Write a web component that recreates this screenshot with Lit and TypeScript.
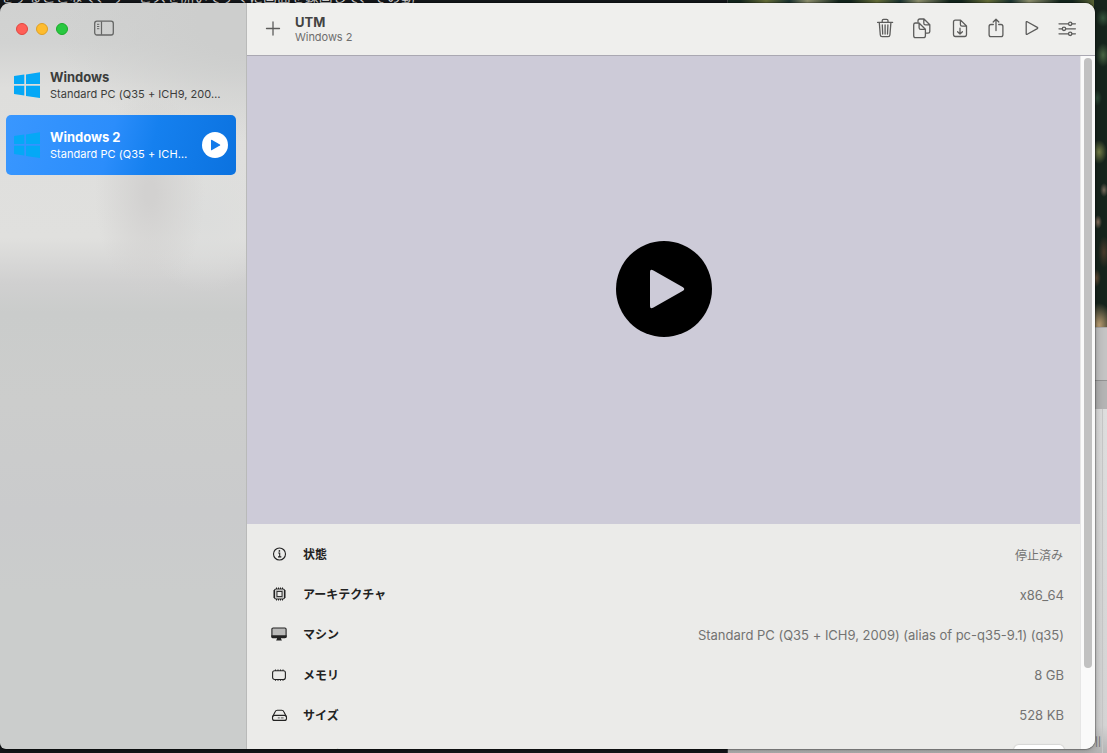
import { LitElement, html, css, svg } from "lit";
import { customElement, property } from "lit/decorators.js";

const toolbarIcons = {
  plus: svg`<path d="M13 6v13M6.500 12.500h13"/>`,
  trash: svg`<g transform="translate(0 1)"><path d="M5.600 6.400h15M7.300 6.600l1 12.400q.1 1.700 1.800 1.700h6q1.700 0 1.800-1.700l1-12.400M10.200 6.200V4.700q0-1.300 1.300-1.300h3.200q1.300 0 1.300 1.300v1.500M10.300 9l.4 9M13.100 9v9M15.900 9l-.4 9"/></g>`,
  copy: svg`<g transform="translate(1.500 .8)"><path d="M8.500 5.700V5Q8.500 3.200 10.300 3.200H14.500L20.300 9V15.600Q20.300 17.400 18.500 17.400H16.800M14.300 3.400V7.400Q14.300 9.100 16 9.100H20M4.200 9Q4.200 7.200 6 7.200H9.500L15.900 13.500V20Q15.900 21.900 14 21.900H6Q4.200 21.900 4.200 20ZM9.600 7.500V11.900Q9.600 13.600 11.300 13.600H15.700"/></g>`,
  download: svg`<g transform="translate(2 1)"><path d="M6.500 6Q6.500 4.100 8.400 4.100H13.600L19.500 10V18.600Q19.500 20.500 17.600 20.500H8.400Q6.500 20.500 6.500 18.600ZM13.400 4.300V8.500Q13.400 10.200 15.100 10.200H19.200M13 12.200V18M10.600 15.700L13 18.100L15.400 15.700"/></g>`,
  share: svg`<g transform="translate(2 1)"><path d="M10.300 8.500H8Q6.100 8.500 6.100 10.400V18.700Q6.100 20.600 8 20.600H18Q19.900 20.600 19.900 18.700V10.400Q19.900 8.500 18 8.500H15.700M13 14.500V3.300M10.200 6L13 3.200L15.800 6"/></g>`,
  play: svg`<g transform="translate(1 0)"><path d="M7.200 7.300Q7.200 6.200 8.200 6.700L18.300 12.400Q19.200 13 18.300 13.600L8.200 19.300Q7.200 19.800 7.200 18.700Z"/></g>`,
  sliders: svg`<g transform="translate(0 .5)"><path d="M5 8.300h9.400M18 8.300h3.400M5 13.300h3.200M11.800 13.300h9.600M5 18.300h9.400M18 18.300h3.400"/><circle cx="16.200" cy="8.300" r="1.700"/><circle cx="10" cy="13.300" r="1.700"/><circle cx="16.200" cy="18.300" r="1.700"/></g>`,
};

const rowIcons = {
  info: svg`<circle cx="8.500" cy="8" r="6"/><path d="M7.200 7h1.500v3.800M7 10.900h3.300"/><circle cx="8.400" cy="4.900" r=".85" fill="currentColor" stroke="none"/>`,
  cpu: svg`<rect x="3.500" y="3" width="10" height="10" rx="1.600"/><path stroke-width="1" d="M5.500 1.500V3M7.500 1.500V3M9.500 1.500V3M11.500 1.500V3M5.500 13v1.500M7.500 13v1.500M9.500 13v1.500M11.500 13v1.500M2 5h1.500M2 7h1.500M2 9h1.500M2 11h1.500M13.500 5H15M13.500 7H15M13.500 9H15M13.500 11H15"/><rect x="4.500" y="4" width="8" height="8" fill="#b8b8b7" stroke="none"/><rect x="6" y="5.500" width="5" height="5" fill="#ebebe9" stroke-width=".9"/>`,
  display: svg`<rect x=".9" y="2" width="14.200" height="9.600" rx="1.200" fill="#b9b9b8"/><path fill="currentColor" stroke="none" d="M.4 9.300h15.200v1.500q0 1.300-1.300 1.300H1.700Q.4 12.100.4 10.800ZM6 12h4v1.500h.8v1.100H5.200v-1.100H6z"/>`,
  memory: svg`<rect x="1.600" y="3.800" width="12.800" height="8.700" rx="2"/><path d="M4.500 2.500v1.300M7 2.500v1.300M9.500 2.500v1.300M12 2.500v1.300M4.500 12.500v1.300M7 12.500v1.300M9.500 12.500v1.300M12 12.500v1.300"/>`,
  drive: svg`<path d="M1.500 10L4 5Q4.700 3.300 6.400 3.300h4.200q1.700 0 2.400 1.700l2.500 5"/><rect x="1.500" y="8.400" width="14" height="5" rx="2"/><path stroke-width="1.300" stroke="#777" d="M6.800 10.900h2M9.800 10.900h2.800"/>`,
};

const windowsLogo = svg`<path d="M0 4L10.300 2.600V12H0ZM12 2.400L26 .3V12H12ZM0 13.700H10.300V23.600L0 22.100ZM12 13.700H26V26L12 23.900Z"/>`;

@customElement("vm-item")
class VmItem extends LitElement {
  @property() name = "";
  @property() desc = "";
  @property({ type: Boolean, reflect: true }) selected = false;

  static styles = css`
    :host { display: flex; align-items: center; height: 60px; padding: 0 8px; box-sizing: border-box; border-radius: 5px; color: #3c3d3c; }
    :host([selected]) { color: #fff; background: linear-gradient(105deg, #3997ff 0%, #2b8dfb 45%, #1580ef 63%, #0b72df 100%); }
    .logo { width: 26px; height: 26px; flex: none; fill: #05a8f6; }
    .text { flex: 1; min-width: 0; margin-left: 10px; }
    .name { font-size: 13px; line-height: 17px; font-weight: 700; letter-spacing: -.02px; white-space: nowrap; }
    .desc { font-size: 11px; line-height: 16px; letter-spacing: .04px; white-space: nowrap; }
    .play { width: 26px; height: 26px; flex: none; }
  `;

  render() {
    return html`
      <svg class="logo" viewBox="0 0 26 26">${windowsLogo}</svg>
      <div class="text">
        <div class="name">${this.name}</div>
        <div class="desc">${this.desc}</div>
      </div>
      ${this.selected
        ? html`<svg class="play" viewBox="0 0 26 26"><circle cx="13" cy="13" r="13" fill="#fff"/><path d="M9 8.600Q9 7.300 10.100 7.900L17.900 12.400Q18.800 13 17.900 13.600L10.100 18.100Q9 18.700 9 17.400Z" fill="#137bea"/></svg>`
        : ""}
    `;
  }
}

@customElement("detail-row")
class DetailRow extends LitElement {
  @property() icon: keyof typeof rowIcons | "" = "";
  @property() label = "";
  @property() value = "";

  static styles = css`
    :host { display: flex; align-items: center; height: 40.200px; padding: 0 16px 0 24px; }
    .icon { width: 17px; height: 16px; flex: none; fill: none; stroke: currentColor; stroke-width: 1.100; color: #222; margin-top: 1px; }
    .label { margin-left: 15px; flex: 1; font-size: 12px; font-weight: 700; color: #222; white-space: nowrap; }
    .value { font-size: 13px; letter-spacing: -.01px; color: #737372; white-space: nowrap; padding-top: 2px; }
    .cjk { font-size: 12px; margin-right: 1px; }
  `;

  render() {
    return html`
      <svg class="icon" viewBox="0 0 17 16">${this.icon ? rowIcons[this.icon] : ""}</svg>
      <span class="label">${this.label}</span>
      <span class="value ${/[\u3040-\u9fff]/.test(this.value) ? "cjk" : ""}">${this.value}</span>
      <slot></slot>
    `;
  }
}

@customElement("app-root")
class AppRoot extends LitElement {
  static styles = css`
    :host { display: block; position: relative; width: 1107px; height: 753px; overflow: hidden; font-family: Inter, "Noto Sans CJK JP", sans-serif; background: #14171a; }
    .desktop { position: absolute; inset: 0; display: grid; grid-template-columns: 728px 1fr; }
    .terminal { color: #d4d4d4; font-size: 13.900px; line-height: 16px; white-space: nowrap; overflow: hidden; background: #14171a; border-right: 1px solid #3b3e40; }
    .line { margin-top: -11px; }
    .behind { display: flex; flex-direction: column; background: #b7b7b7; }
    .photo { height: 327px; background:
      radial-gradient(ellipse 7px 9px at 375px 18px, #35543c, transparent),
      radial-gradient(ellipse 7px 12px at 375px 55px, #4a6644, transparent),
      radial-gradient(ellipse 5px 8px at 369px 98px, #2e4d3a, transparent),
      radial-gradient(ellipse 8px 12px at 371px 152px, #77824a, transparent),
      radial-gradient(ellipse 4px 7px at 376px 190px, #75695a, transparent),
      radial-gradient(ellipse 4px 7px at 370px 222px, #8a7462, transparent),
      radial-gradient(ellipse 6px 16px at 376px 252px, #4a3c2c, transparent),
      radial-gradient(ellipse 5px 9px at 368px 278px, #6a5138, transparent),
      radial-gradient(ellipse 14px 22px at 371px 325px, #c0a276, transparent),
      linear-gradient(90deg, transparent 366px, #16241c 366px),
      repeating-linear-gradient(97deg, #14261e 0 12px, #67703a 38px, #1c3431 61px, #909370 79px, #14261e 110px); }
    .bar { height: 52px; background: #c4c4c4; border-bottom: 1px solid #939393; border-top: 1px solid #aaa; }
    .tab { height: 28px; background: #b4b4b4; }
    .doc { flex: 1; background: linear-gradient(90deg, transparent 374px, #c9c9c9 374px 375px, transparent 375px), linear-gradient(#dedede, #d4d4d4 92%, #b5b5b5); font-size: 9px; color: #666; display: flex; align-items: flex-end; justify-content: flex-end; padding: 0 6px 6px 0; }
    .window { position: absolute; left: 0; top: 3px; width: 1095px; height: 746px; display: flex; overflow: hidden; border-radius: 9px 10px 10px 6px; box-shadow: 0 0 1px 1px rgba(0,0,0,.28), 1px 2px 8px rgba(0,0,0,.25); }
    .sidebar { width: 246px; flex: none; border-right: 1px solid #b9bab9; background:
      radial-gradient(ellipse 55px 105px at 150px 190px, #d2d1d0 10%, transparent),
      radial-gradient(ellipse 65px 75px at 205px 215px, #dcdddc, transparent),
      radial-gradient(ellipse 190px 120px at 245px 20px, #cdcecd 25%, transparent),
      linear-gradient(180deg, #d0d1d0 0, #d2d3d2 40px, #dededc 85px, #e0e0de 235px, #d0d0d0 280px, #cacccb 310px, #cccdcc 400px, #cacbcc 510px, #cbcdcc 590px, #cbcdcc 100%); }
    .chrome { height: 52px; display: flex; align-items: center; padding-left: 16px; gap: 8px; }
    .light { width: 12px; height: 12px; border-radius: 50%; box-sizing: border-box; border: 1px solid; }
    .red { background: #ff5f57; border-color: #e14640; }
    .yellow { background: #febc2e; border-color: #dfa023; }
    .green { background: #28c840; border-color: #1aab29; }
    .toggle { width: 20px; height: 16px; margin-left: 18px; margin-bottom: 2px; fill: none; stroke: #656665; }
    .list { padding: 0 10px 0 6px; }
    .main { flex: 1; min-width: 0; display: flex; flex-direction: column; background: #ebebe9; }
    .toolbar { height: 52px; flex: none; display: flex; align-items: center; background: #efefed; border-bottom: 1px solid #aaa8b2; padding: 0 15px 0 13px; box-sizing: content-box; }
    .tool { width: 26px; height: 26px; flex: none; fill: none; stroke: #5c5c5b; stroke-width: 1.300; stroke-linecap: round; stroke-linejoin: round; }
    .titles { flex: 1; margin-left: 9px; padding-top: 0; }
    .title { font-size: 13px; font-weight: 700; line-height: 15px; color: #434343; }
    .subtitle { font-size: 11px; line-height: 14px; color: #6e6e6d; letter-spacing: -.05px; }
    .tools { display: flex; gap: 10.500px; margin-bottom: 2px; }
    .body { flex: 1; min-height: 0; display: flex; }
    .content { width: 833px; overflow: hidden; }
    .screen { height: 468px; display: flex; align-items: center; justify-content: center; background: #cdcbd8; }
    .start { width: 96px; height: 96px; margin-bottom: 2px; }
    .rows { padding-top: 9.500px; }
    .browse { width: 50px; height: 20px; border-radius: 5px; background: #fff; box-shadow: 0 0 1px 1px #d6d6d5; margin-top: 1px; }
    .scroll { flex: 1; background: #fafafa; border-left: 1px solid #e6e6e6; padding: 2px 3px 0; display: flex; justify-content: center; }
    .thumb { width: 8px; height: 610px; border-radius: 4px; background: #c1c1c1; }
  `;

  render() {
    const tool = (name: keyof typeof toolbarIcons) =>
      html`<svg class="tool" viewBox="0 0 26 26">${toolbarIcons[name]}</svg>`;
    return html`
      <div class="desktop">
        <div class="terminal"><div class="line">をすることなく、サービスを開いてすぐに画面を録画して、その動</div></div>
        <div class="behind">
          <div class="photo"></div><div class="bar"></div><div class="tab"></div><div class="doc">||</div>
        </div>
      </div>
      <div class="window">
        <div class="sidebar">
          <div class="chrome">
            <span class="light red"></span><span class="light yellow"></span><span class="light green"></span>
            <svg class="toggle" viewBox="0 0 20 16"><rect x=".7" y="1.200" width="18.600" height="13.800" rx="2.200" stroke-width="1.300"/><path d="M7.500 1.500v13.200" stroke-width="1.200"/><path d="M3 4.300h2.300M3 6.500h2.300M3 8.700h2.300"/></svg>
          </div>
          <div class="list">
            <vm-item name="Windows" desc="Standard PC (Q35 + ICH9, 200…"></vm-item>
            <vm-item name="Windows 2" desc="Standard PC (Q35 + ICH…" selected></vm-item>
          </div>
        </div>
        <div class="main">
          <div class="toolbar">
            ${tool("plus")}
            <div class="titles"><div class="title">UTM</div><div class="subtitle">Windows 2</div></div>
            <div class="tools">${tool("trash")}${tool("copy")}${tool("download")}${tool("share")}${tool("play")}${tool("sliders")}</div>
          </div>
          <div class="body">
            <div class="content">
              <div class="screen">
                <svg class="start" viewBox="0 0 96 96"><circle cx="48" cy="48" r="48"/><path d="M34 31Q34 27.500 37.500 29.500L67 46.200Q69.500 48 67 49.800L37.500 66.500Q34 68.500 34 65Z" fill="#cdcbd8"/></svg>
              </div>
              <div class="rows">
                <detail-row icon="info" label="状態" value="停止済み"></detail-row>
                <detail-row icon="cpu" label="アーキテクチャ" value="x86_64"></detail-row>
                <detail-row icon="display" label="マシン" value="Standard PC (Q35 + ICH9, 2009) (alias of pc-q35-9.1) (q35)"></detail-row>
                <detail-row icon="memory" label="メモリ" value="8 GB"></detail-row>
                <detail-row icon="drive" label="サイズ" value="528 KB"></detail-row>
                <detail-row label="共有ディレクトリ"><div class="browse"></div></detail-row>
              </div>
            </div>
            <div class="scroll"><div class="thumb"></div></div>
          </div>
        </div>
      </div>
    `;
  }
}
